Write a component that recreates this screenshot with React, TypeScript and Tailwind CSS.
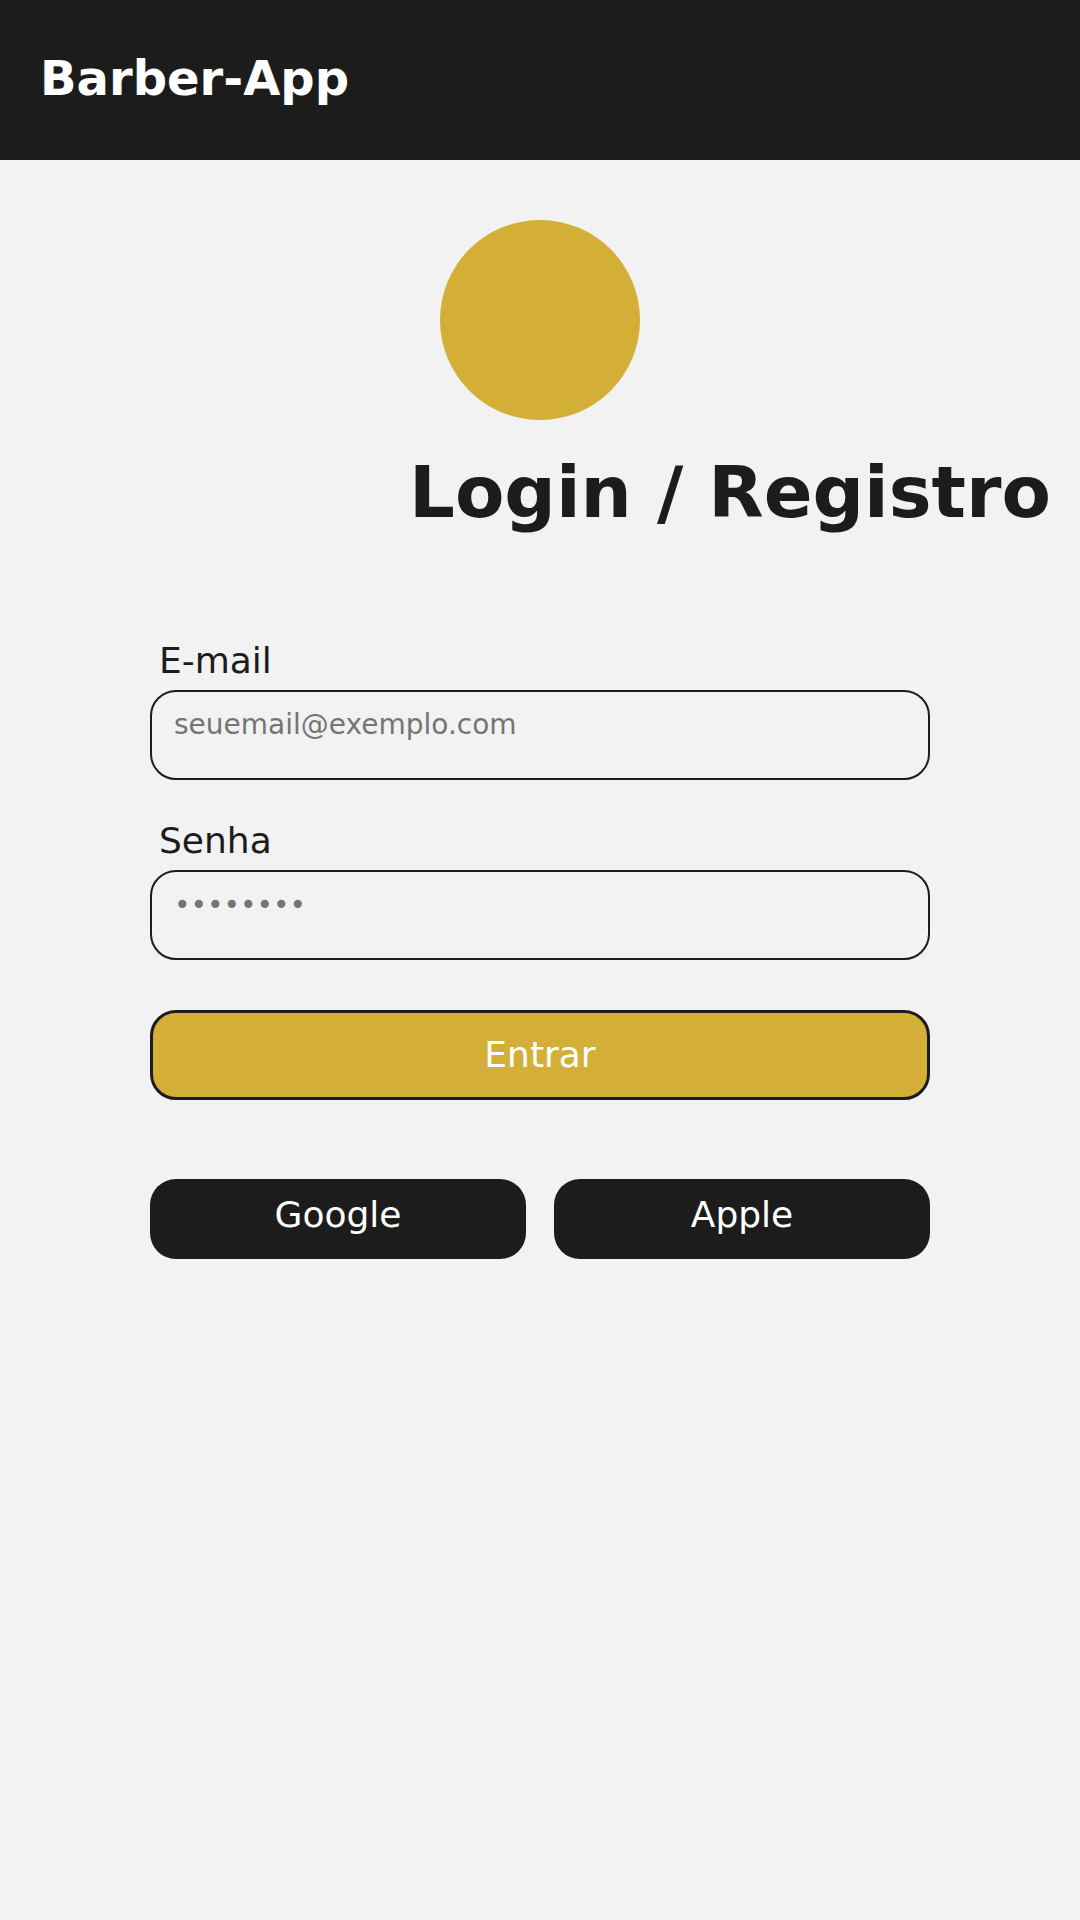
import { useState } from 'react';

export default function App() {
  const [email, setEmail] = useState('');
  const [senha, setSenha] = useState('');

  return (
    <div className="min-h-[1920px] w-full bg-[#f2f2f2] text-[#1c1c1c] font-['DejaVu_Sans',sans-serif]">
      {/* Top bar */}
      <header className="h-[160px] bg-[#1c1c1c] flex items-center px-10 pb-[4px]">
        <h1 className="text-[48px] font-bold text-white leading-[56px]">Barber-App</h1>
      </header>

      <main className="flex flex-col items-center pt-[60px]">
        {/* Logo placeholder */}
        <div className="w-[200px] h-[200px] rounded-full bg-[#d4af37]" />

        <h2 className="self-start ml-[409px] mt-[30px] text-[72px] font-bold leading-[84px] whitespace-nowrap">
          Login / Registro
        </h2>

        <form className="w-[780px] flex flex-col mt-[106px]" onSubmit={(e) => e.preventDefault()}>
          <label htmlFor="email" className="pl-[9px] mb-2 text-[36px] leading-[42px]">
            E-mail
          </label>
          <input
            id="email"
            type="email"
            value={email}
            onChange={(e) => setEmail(e.target.value)}
            placeholder="seuemail@exemplo.com"
            className="h-[90px] rounded-[26px] border-2 border-[#1c1c1c] bg-transparent pl-[22px] pr-5 pt-4 pb-[38px] text-[28px] leading-[32px] outline-none placeholder:text-[#757575]"
          />

          <label htmlFor="senha" className="pl-[9px] mt-10 mb-2 text-[36px] leading-[42px]">
            Senha
          </label>
          <input
            id="senha"
            type="password"
            value={senha}
            onChange={(e) => setSenha(e.target.value)}
            placeholder="••••••••"
            className="h-[90px] rounded-[26px] border-2 border-[#1c1c1c] bg-transparent pl-[22px] pr-5 pt-4 pb-[38px] text-[28px] leading-[32px] outline-none placeholder:text-[#757575]"
          />

          <button
            type="submit"
            className="mt-[50px] h-[90px] rounded-[26px] border-[3px] border-[#1c1c1c] bg-[#d4af37] text-white text-[36px] leading-[42px]"
          >
            Entrar
          </button>

          <div className="mt-[79px] flex gap-[28px]">
            <button
              type="button"
              className="flex-1 h-[80px] rounded-[26px] bg-[#1c1c1c] text-white text-[36px] leading-[42px] flex items-start justify-center pt-[15px]"
            >
              Google
            </button>
            <button
              type="button"
              className="flex-1 h-[80px] rounded-[26px] bg-[#1c1c1c] text-white text-[36px] leading-[42px] flex items-start justify-center pt-[15px]"
            >
              Apple
            </button>
          </div>
        </form>
      </main>
    </div>
  );
}
